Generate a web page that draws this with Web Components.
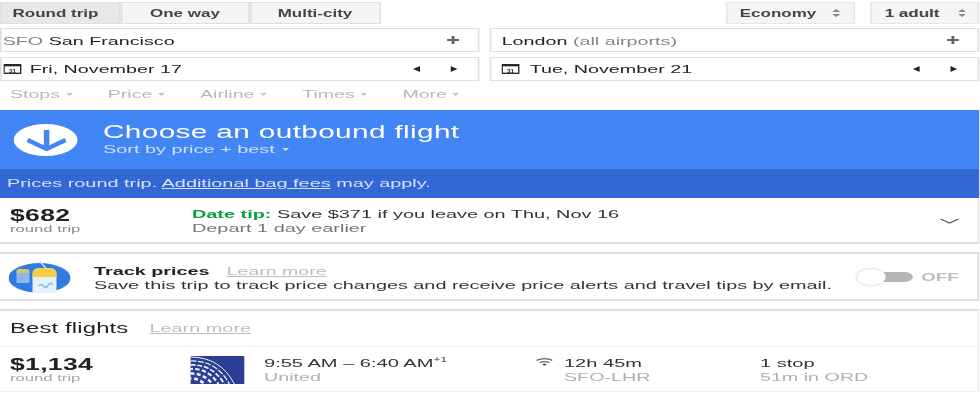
<!DOCTYPE html>
<html lang="en"><head><meta charset="utf-8"><title>Flights</title>
<style>
html,body{margin:0;padding:0;background:#fff;overflow:hidden;height:400px}
body{font-family:"Liberation Sans",Arial,sans-serif;--k:1.7}
</style></head><body>
<gf-app>
  <gf-toolbar>
    <gf-tab active>Round trip</gf-tab><gf-tab w="130">One way</gf-tab><gf-tab w="130">Multi-city</gf-tab>
    <gf-select slot="right" w="129">Economy</gf-select><gf-select slot="right" w="109">1 adult</gf-select>
  </gf-toolbar>
  <gf-fields>
    <gf-field kind="place"><span style="color:#80868b">SFO</span> San Francisco</gf-field>
    <gf-field kind="place" pad><span>London</span> <span style="color:#80868b">(all airports)</span></gf-field>
    <gf-field kind="date">Fri, November 17</gf-field>
    <gf-field kind="date" pad>Tue, November 21</gf-field>
  </gf-fields>
  <gf-filters><gf-filter>Stops</gf-filter><gf-filter>Price</gf-filter><gf-filter>Airline</gf-filter><gf-filter>Times</gf-filter><gf-filter>More</gf-filter></gf-filters>
  <gf-banner></gf-banner>
  <gf-tip></gf-tip>
  <gf-track></gf-track>
  <gf-best></gf-best>
</gf-app>
<script>
const def=(name,html)=>customElements.define(name,class extends HTMLElement{
  connectedCallback(){ if(this.shadowRoot)return; const r=this.attachShadow({mode:'open'}); r.innerHTML=typeof html==='function'?html(this):html; }
});
const px=n=>`calc(${n}px / var(--k))`;
def('gf-app',`<style>:host{display:block;width:${px(980)};height:400px;transform:scaleX(var(--k));transform-origin:0 0;color:#212121;filter:blur(.35px)}</style><slot></slot>`);
def('gf-toolbar',`<style>:host{display:flex;justify-content:space-between;padding-top:2px;height:22px}
 div{display:flex} .r{gap:${px(16)}}</style><div><slot></slot></div><div class="r"><slot name="right"></slot></div>`);
def('gf-tab',h=>`<style>:host{display:flex;align-items:center;justify-content:center;box-sizing:border-box;width:${px(+(h.getAttribute('w')||120))};height:22px;background:${h.hasAttribute('active')?'#e8e8e8':'#f5f5f5'};border:1px solid #e0e0e0;font-size:10px;font-weight:700;color:#444;${h.hasAttribute('active')?`padding-right:${px(9)};`:''}}</style><slot></slot>`);
def('gf-select',h=>`<style>:host{display:flex;align-items:center;justify-content:space-between;box-sizing:border-box;width:${px(+h.getAttribute('w'))};height:22px;padding:0 ${px(12)};background:#f5f5f5;border:1px solid #e6e6e6;font-size:10px;font-weight:700;color:#444}
 svg{width:${px(10)};height:10px;display:block}</style><slot></slot><svg viewBox="0 0 10 10" preserveAspectRatio="none"><path d="M1 4 5 1 9 4zM1 6 5 9 9 6z" fill="#8a8a8a"/></svg>`);
def('gf-fields',`<style>:host{display:grid;grid-template-columns:${px(480)} ${px(491)};column-gap:${px(9)};row-gap:5px;padding-top:4px}</style><slot></slot>`);
def('gf-field',h=>{const place=h.getAttribute('kind')==='place';const p=h.hasAttribute('pad');
 const cal=`<svg class="cal" viewBox="0 0 18 10" preserveAspectRatio="none"><rect x=".7" y=".7" width="16.6" height="8.6" fill="#fff" stroke="#222" stroke-width="1.3"/><rect x=".7" y=".7" width="16.6" height="1.6" fill="#222"/><text x="9" y="8.6" text-anchor="middle" font-size="6.2" font-weight="700" font-family="Liberation Sans" fill="#222">31</text></svg>`;
 const icons=place?`<svg class="a" style="width:${px(12)};margin-right:${px(p?19:20)}" viewBox="0 0 12 8" preserveAspectRatio="none"><path d="M0 3h12v2H0zM4.6 0h2.8v8H4.6z" fill="#666"/></svg>`
 :`<span class="arr"><svg viewBox="0 0 8 8" preserveAspectRatio="none"><path d="M8 0v8L0 4z" fill="#222"/></svg><svg viewBox="0 0 8 8" preserveAspectRatio="none"><path d="M0 0v8l8-4z" fill="#222"/></svg></span>`;
 return `<style>:host{display:flex;align-items:center;box-sizing:border-box;height:24px;border:1px solid #e0e0e0;font-size:11.6px;color:#222;padding-left:${px(place?(p?11:1):(p?11:2))}}
 .t{flex:1;white-space:pre;${place?'':'padding-bottom:1px'}}.cal{width:${px(18)};height:10px;margin-right:${px(place?0:(p?10:8))};flex:none}
 .a{height:8px;flex:none}.arr{display:flex;gap:${px(30)};margin-right:${px(p?21:21)}}.arr svg{width:${px(7)};height:6px;display:block}</style>
 ${place?'':cal}<span class="t"><slot></slot></span>${icons}`});
def('gf-filters',`<style>:host{display:flex;gap:${px(35)};padding:4px 0 0 ${px(10)};height:29px;box-sizing:border-box;align-items:flex-start}</style><slot></slot>`);
def('gf-filter',`<style>:host{display:flex;align-items:center;gap:${px(6)};font-size:11.5px;line-height:18px;color:#b8b8b8}
 i{display:block;width:0;height:0;border-left:${px(5)} solid transparent;border-right:${px(5)} solid transparent;border-top:3px solid #c4c4c4}</style><slot></slot><i></i>`);
def('gf-banner',`<style>:host{display:block;color:#fff}
 .top{display:flex;background:#4285f4;height:59px;box-sizing:border-box;padding-left:${px(14)};align-items:center;gap:${px(25)}}
 svg{width:${px(64)};height:32px;flex:none;display:block}
 .x{margin-bottom:2px}
 h1{margin:0;font-size:17.55px;line-height:19px;font-weight:400;letter-spacing:.2px}
 p{margin:0;font-size:11.7px;line-height:13px;color:#cfe0fc}
 p i{display:inline-block;width:0;height:0;border-left:${px(5)} solid transparent;border-right:${px(5)} solid transparent;border-top:3px solid #cfe0fc;vertical-align:2px;margin-left:${px(2)}}
 .bag{background:#3367d6;height:29px;line-height:28px;box-sizing:border-box;padding-left:${px(7)};font-size:11.7px;color:#d5e2fa}
 a{color:inherit;text-decoration:underline}</style>
 <div class="top"><svg viewBox="0 0 64 32" preserveAspectRatio="none"><ellipse cx="32" cy="16" rx="32" ry="16" fill="#fff"/><path d="M33 6V24" fill="none" stroke="#4285f4" stroke-width="5.6"/><path d="M14 16 33 25 52 16" fill="none" stroke="#4285f4" stroke-width="4.2" stroke-linejoin="round"/></svg>
 <div class="x"><h1>Choose an outbound flight</h1><p>Sort by price + best <i></i></p></div></div>
 <div class="bag">Prices round trip. <a>Additional bag fees</a> may apply.</div>`);
def('gf-tip',`<style>:host{display:grid;grid-template-columns:${px(182)} 1fr ${px(38)};box-sizing:border-box;height:45px;margin-top:1px;padding:1px 0 0 ${px(10)};align-items:center;border-right:1px solid #e6e6e6;border-bottom:2px solid #dedede}
 .pr{font-size:15.6px;line-height:15px;font-weight:700;color:#212121;letter-spacing:.2px}.s{font-size:9.8px;line-height:11px;color:#8a8a8a}
 .l{font-size:11.7px;line-height:14px;color:#333}b{color:#0f9d3f}.d{color:#757575}
 svg{width:${px(19)};height:6px;display:block}</style>
 <div><div class="pr">$682</div><div class="s">round trip</div></div>
 <div><div class="l"><b>Date tip:</b> Save $371 if you leave on Thu, Nov 16</div><div class="l d">Depart 1 day earlier</div></div>
 <svg viewBox="0 0 19 6" preserveAspectRatio="none"><path d="M.5 1 9.5 5 18.5 1" fill="none" stroke="#555" stroke-width="1.3"/></svg>`);
def('gf-track',`<style>:host{display:flex;align-items:center;box-sizing:border-box;height:49px;margin-top:8px;border:solid #dedede;border-width:2px 1px 2px 0;padding-left:${px(9)}}
 .ic{width:${px(62)};height:32px;flex:none;display:block;margin-right:${px(23)}}
 .m{flex:1;font-size:11.67px;line-height:13px;color:#333;padding-top:1px}
 b{color:#222}a{color:#bdbdbd;text-decoration:underline;margin-left:${px(17)};font-size:11.5px}
 .tg{display:flex;align-items:center;width:${px(122)};flex:none;font-size:11px;font-weight:700;color:#bdbdbd;gap:${px(8)}}
 .sw{position:relative;width:${px(57)};height:10px;background:#b5b5b5;border-radius:5px;flex:none}
 .sw:before{content:"";position:absolute;left:0;top:-3px;width:${px(29)};height:16px;border-radius:50%;background:#fff;box-shadow:0 0 2px #bbb}
 </style>
 <svg class="ic" viewBox="0 0 62 32" preserveAspectRatio="none"><ellipse cx="31" cy="17" rx="31" ry="15" fill="#2f7de1"/><path d="M8 11q0-3 3-3h7q3 0 3 3v11H8z" fill="#8bb8e8"/><path d="M8 12v-1q0-3 3-3h7q3 0 3 3v1z" fill="#d8c56a"/><path d="M31 0 39 9" stroke="#cfe3f7" stroke-width="1.5"/><path d="M24 13q0-5 6-6h12q6 1 6 6v19H24z" fill="#e6f1fb"/><path d="M24 16v-3q0-5 6-6h12q6 1 6 6v3z" fill="#f5cf45"/><path d="M30 25q3-3 5 0t5-1 4 0" fill="none" stroke="#8ab8ea" stroke-width="1.6"/></svg>
 <div class="m"><div><b>Track prices</b><a>Learn more</a></div><div>Save this trip to track price changes and receive price alerts and travel tips by email.</div></div>
 <div class="tg"><span class="sw"></span><span>OFF</span></div>`);
def('gf-best',`<style>:host{display:block;margin-top:8px;border-top:2px solid #dedede;border-right:1px solid #eee}
 .h{display:flex;align-items:center;height:36px;box-sizing:border-box;padding:0 0 2px ${px(10)};font-size:14px;color:#222;border-bottom:1px solid #eee;letter-spacing:.1px}
 a{color:#bdbdbd;text-decoration:underline;font-size:11.7px;margin-left:${px(21)};letter-spacing:0}
 .r{display:grid;grid-template-columns:${px(181)} ${px(73)} ${px(271)} ${px(29)} ${px(196)} 1fr;height:45px;box-sizing:border-box;padding:2px 0 0 ${px(10)};align-items:center;border-bottom:1px solid #eee}
 .pr{font-size:15.6px;line-height:15px;font-weight:700;color:#212121;letter-spacing:.2px}.s{font-size:9.8px;line-height:11px;color:#a5a5a5}
 .l{font-size:11.8px;line-height:13px;color:#333}.g{font-size:11.6px;line-height:13px;color:#b0b0b0}
 sup{font-size:7px;line-height:0}
 .logo{width:${px(54)};height:28px;display:block}.wifi{width:${px(18)};height:8px;display:block;margin-top:-16px}</style>
 <div class="h"><span>Best flights</span><a>Learn more</a></div>
 <div class="r"><div><div class="pr">$1,134</div><div class="s">round trip</div></div>
 <svg class="logo" viewBox="0 0 54 28" preserveAspectRatio="none"><rect width="54" height="28" fill="#2a3f93"/><g fill="none" stroke="#eef2fb"><path stroke-width="1" d="M0 1Q30 1 44 28"/><path stroke-width="1.2" stroke-dasharray="6 1.5" d="M0 5Q26 4 39 28"/><path stroke-width="1.7" stroke-dasharray="5 1.8" d="M0 9Q22 8 34 28"/><path stroke-width="2.1" stroke-dasharray="4.5 2.2" stroke-dashoffset="2" d="M0 13Q18 12 28 28"/><path stroke-width="2.5" stroke-dasharray="4 2.4" d="M0 17.5Q13 17 22 28"/><path stroke-width="2.8" stroke-dasharray="4 2.6" stroke-dashoffset="3" d="M0 22.5Q8 22 14 28"/></g></svg>
 <div><div class="l">9:55 AM – 6:40 AM<sup>+1</sup></div><div class="g">United</div></div>
 <svg class="wifi" viewBox="0 0 18 8" preserveAspectRatio="none"><path d="M1 2.3Q9-1 17 2.3M4.2 4.6Q9 2.6 13.8 4.6" fill="none" stroke="#666" stroke-width="1.3"/><path d="M6.5 6.2Q9 5 11.5 6.2L9 8Z" fill="#666"/></svg>
 <div><div class="l">12h 45m</div><div class="g">SFO-LHR</div></div>
 <div><div class="l">1 stop</div><div class="g">51m in ORD</div></div></div>`);
</script></body></html>
